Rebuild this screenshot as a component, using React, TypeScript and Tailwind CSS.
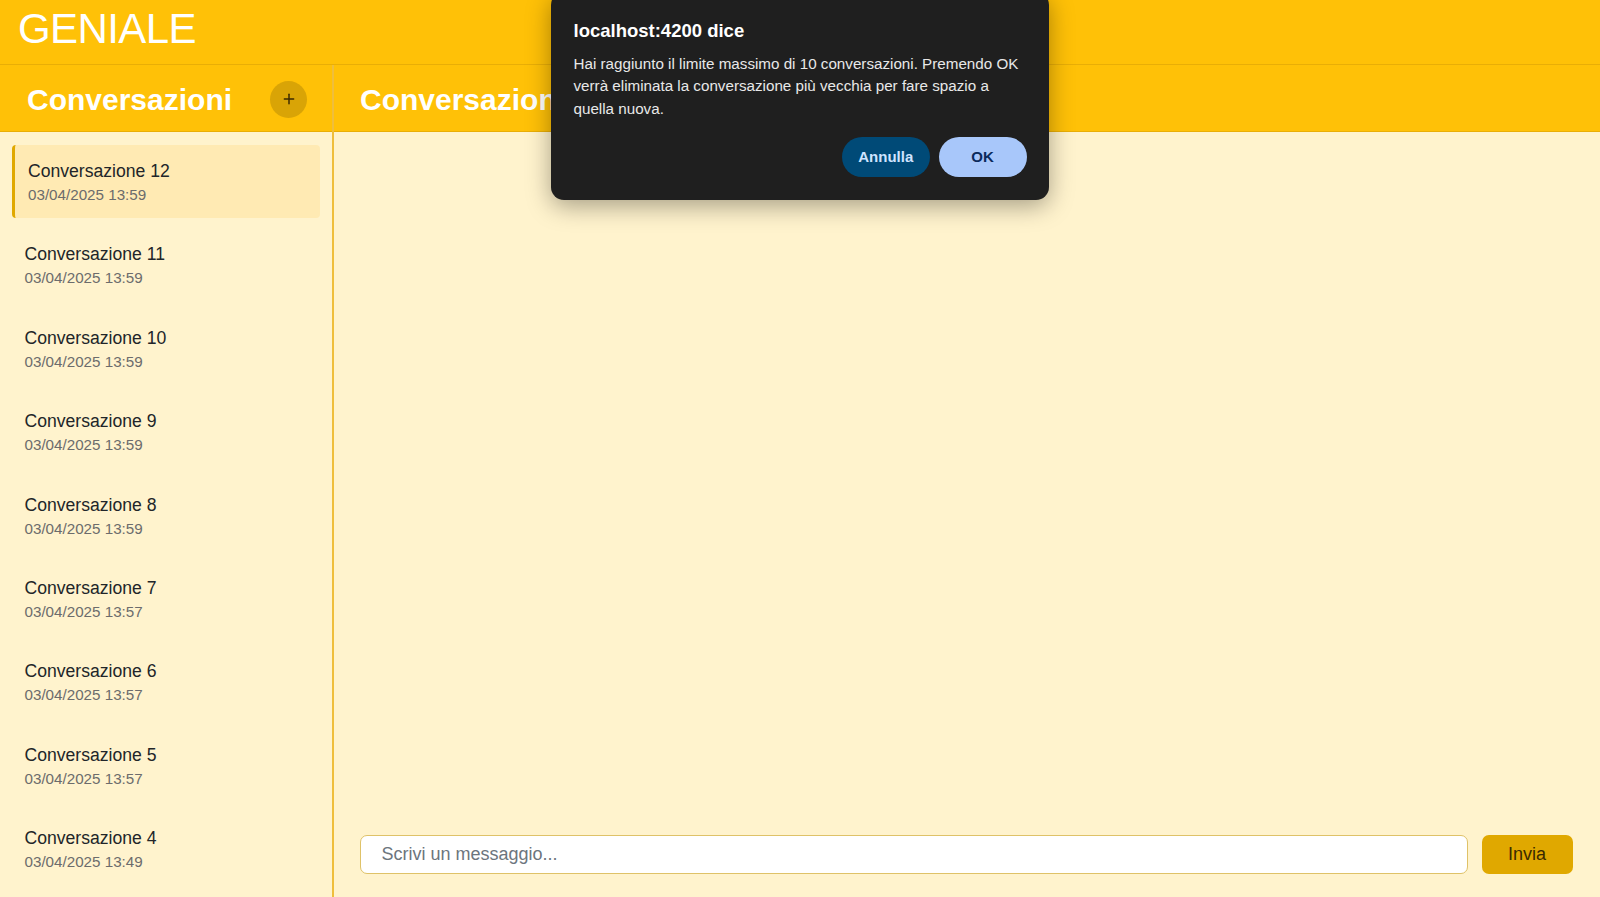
import { Plus } from "lucide-react";

type Conversation = {
  id: number;
  title: string;
  date: string;
};

const conversations: Conversation[] = [
  { id: 12, title: "Conversazione 12", date: "03/04/2025 13:59" },
  { id: 11, title: "Conversazione 11", date: "03/04/2025 13:59" },
  { id: 10, title: "Conversazione 10", date: "03/04/2025 13:59" },
  { id: 9, title: "Conversazione 9", date: "03/04/2025 13:59" },
  { id: 8, title: "Conversazione 8", date: "03/04/2025 13:59" },
  { id: 7, title: "Conversazione 7", date: "03/04/2025 13:57" },
  { id: 6, title: "Conversazione 6", date: "03/04/2025 13:57" },
  { id: 5, title: "Conversazione 5", date: "03/04/2025 13:57" },
  { id: 4, title: "Conversazione 4", date: "03/04/2025 13:49" },
];

function ConfirmDialog() {
  return (
    <div className="absolute top-[-8px] left-[551px] w-[498px] rounded-[13px] bg-[#1f1f1f] px-[22.5px] pt-[26.5px] pb-[23px] shadow-[0_6px_24px_rgba(0,0,0,0.35)]">
      <p className="text-[18.5px] leading-[24px] font-bold text-white">
        localhost:4200 dice
      </p>
      <p className="mt-[10.5px] text-[15.2px] leading-[22.4px] text-[#e8e8e8]">
        Hai raggiunto il limite massimo di 10 conversazioni. Premendo OK
        <br />
        verrà eliminata la conversazione più vecchia per fare spazio a
        <br />
        quella nuova.
      </p>
      <div className="mt-[17px] flex justify-end gap-[9px]">
        <button
          type="button"
          className="h-[39.5px] w-[87.5px] rounded-full bg-[#004a77] text-[15px] font-bold text-[#cfe4ff]"
        >
          Annulla
        </button>
        <button
          type="button"
          className="h-[39.5px] w-[88px] rounded-full bg-[#a8c7fa] text-[15px] font-bold text-[#0a2a5c]"
        >
          OK
        </button>
      </div>
    </div>
  );
}

export default function App() {
  const selectedId = 12;

  return (
    <div className="relative flex h-screen flex-col overflow-hidden bg-[#fff3cd] font-['Liberation_Sans',Arial,sans-serif]">
      <header className="flex h-[65px] shrink-0 items-center border-b border-[#e9ae06] bg-[#ffc107] px-[18px] pb-[6px]">
        <h1 className="text-[42px] leading-none tracking-[-0.6px] text-white">
          GENIALE
        </h1>
      </header>

      <div className="flex min-h-0 flex-1">
        <aside className="flex w-[334px] shrink-0 flex-col border-r-2 border-[#efbe3c]">
          <div className="flex h-[67px] shrink-0 items-center justify-between border-b border-[#e9ae06] bg-[#ffc107] pt-[2px] pr-[25px] pl-[27px]">
            <h2 className="text-[30px] font-bold text-white">Conversazioni</h2>
            <button
              type="button"
              className="flex h-[37px] w-[37px] items-center justify-center rounded-full bg-[#d9a406] text-[#3a2800]"
            >
              <Plus size={16} strokeWidth={2.2} />
            </button>
          </div>

          <div className="flex flex-col gap-[10.4px] overflow-hidden px-[12px] pt-[13px]">
            {conversations.map((conv) => {
              const isSelected = conv.id === selectedId;
              return (
                <div
                  key={conv.id}
                  className={
                    isSelected
                      ? "h-[73px] shrink-0 rounded-[4px] border-l-[3px] border-[#e0a800] bg-[#ffeab3] pt-[15px] pl-[13px]"
                      : "h-[73px] shrink-0 rounded-[4px] pt-[15px] pl-[12.5px]"
                  }
                >
                  <p className="text-[17.6px] leading-[22px] text-[#212529]">
                    {conv.title}
                  </p>
                  <p className="mt-[2px] text-[15.2px] leading-[22px] text-[#6c6c6c]">
                    {conv.date}
                  </p>
                </div>
              );
            })}
          </div>
        </aside>

        <main className="flex min-w-0 flex-1 flex-col">
          <div className="flex h-[67px] shrink-0 items-center border-b border-[#e9ae06] bg-[#ffc107] pt-[2px] pl-[26px]">
            <h2 className="text-[30px] font-bold text-white">
              Conversazione 12
            </h2>
          </div>

          <div className="flex-1" />

          <div className="flex gap-[14px] pr-[27.5px] pb-[23px] pl-[25.5px]">
            <input
              type="text"
              placeholder="Scrivi un messaggio..."
              className="h-[39.5px] flex-1 rounded-[7px] border-[1.5px] border-[#dfc268] bg-white px-[21px] text-[18px] text-[#212529] outline-none placeholder:text-[#6c757d]"
            />
            <button
              type="button"
              className="h-[39.5px] w-[91px] rounded-[7px] bg-[#e0a800] text-[18px] text-[#3a2a00]"
            >
              Invia
            </button>
          </div>
        </main>
      </div>

      <ConfirmDialog />
    </div>
  );
}
